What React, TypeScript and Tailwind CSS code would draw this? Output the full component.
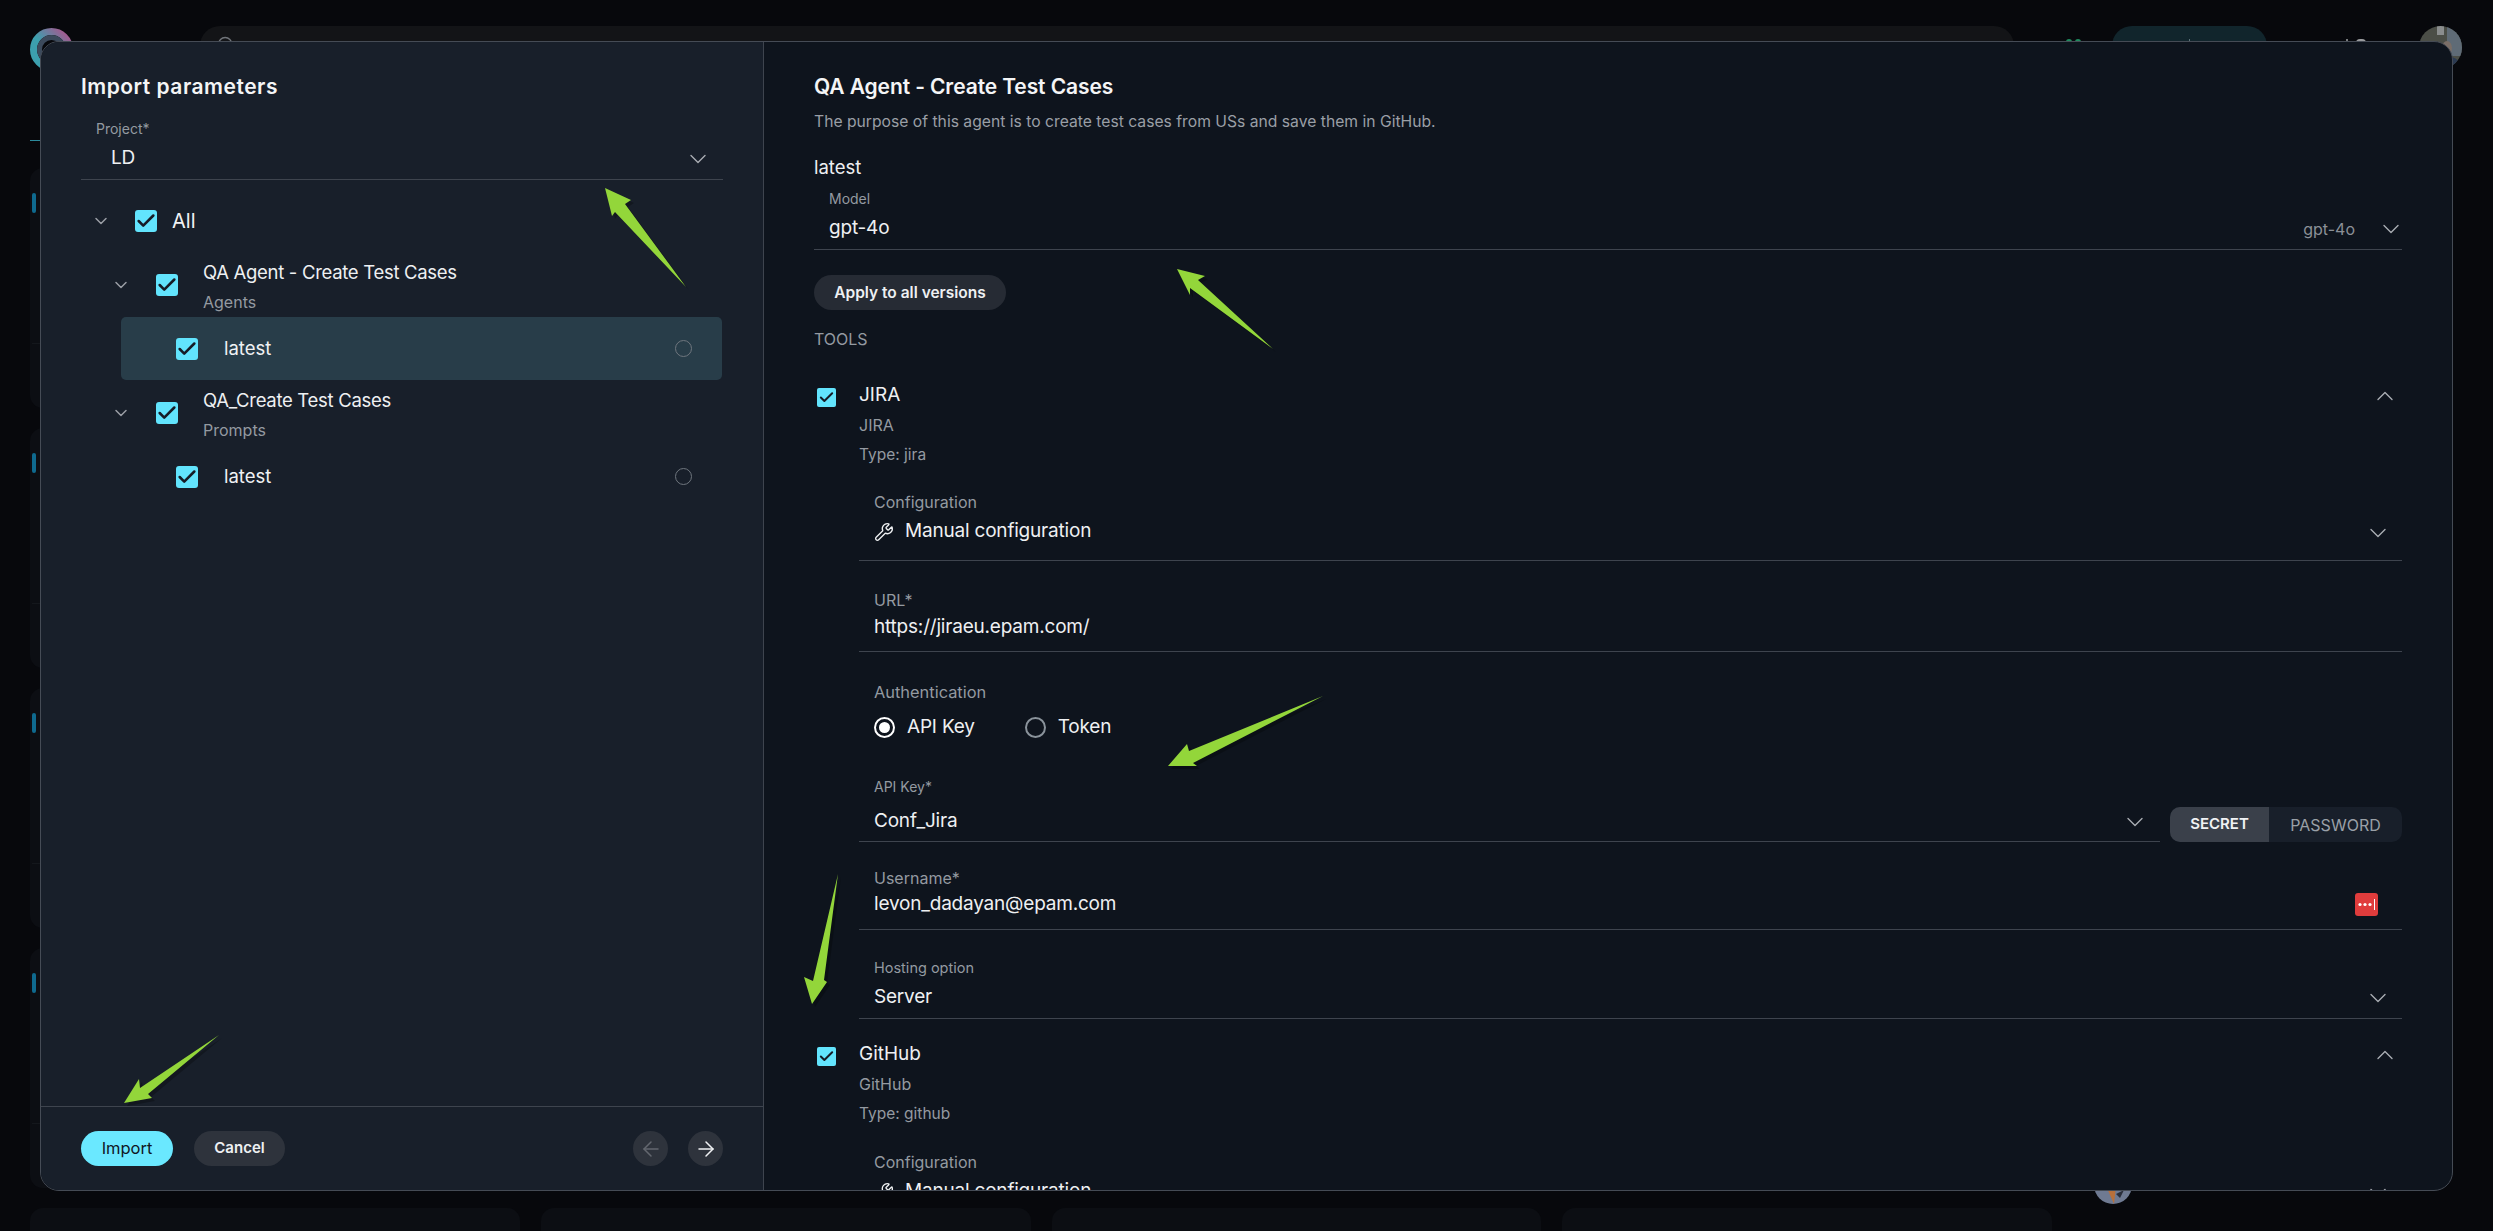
import { ReactNode } from 'react';
import { ArrowLeft, ArrowRight, Check, ChevronDown, ChevronUp, Search, Wrench } from 'lucide-react';

const TitleRow = ({ children, className = '' }: { children: ReactNode; className?: string }) => (
  <div className={`h-[24px] leading-[24px] text-[21px] font-semibold text-[#f4f5f6] ${className}`}>{children}</div>
);

const CheckBox = ({ size = 'big' }: { size?: 'big' | 'small' }) => (
  <div
    className={
      size === 'big'
        ? 'flex h-[22px] w-[22px] shrink-0 items-center justify-center rounded-[3px] bg-[#62e4fd]'
        : 'flex h-[19px] w-[19px] shrink-0 items-center justify-center rounded-[2px] bg-[#62e4fd]'
    }
  >
    <Check size={size === 'big' ? 22 : 17} strokeWidth={2.8} className="shrink-0 text-[#161c26]" />
  </div>
);

const Field = ({
  label,
  labelClass = 'text-[16px]',
  valueClass = 'mt-[5px]',
  className = 'pb-[6px]',
  children,
}: {
  label: string;
  labelClass?: string;
  valueClass?: string;
  className?: string;
  children: ReactNode;
}) => (
  <div className={`border-b border-[#3e444e] ${className}`}>
    <div className={`h-[18px] leading-[18px] text-[#949aa1] ${labelClass}`}>{label}</div>
    <div className={`flex h-[30px] items-center pt-[1px] text-[19px] tracking-[-0.2px] text-[#eef0f2] ${valueClass}`}>{children}</div>
  </div>
);

const Caret = () => <ChevronDown size={28} strokeWidth={1.2} className="text-[#a9adb3]" />;

const TreeGroup = ({ title, sub, selected }: { title: string; sub: string; selected?: boolean }) => (
  <>
    <div className="flex h-[62px] items-start pl-[70px]">
      <ChevronDown size={20} strokeWidth={1.8} className="mt-[20px] text-[#9a9ea5]" />
      <div className="ml-[25px] mt-[19px]">
        <CheckBox />
      </div>
      <div className="ml-[25px] mt-[5px]">
        <div className="h-[24px] text-[18.5px] leading-[24px] tracking-[-0.3px] text-[#eef0f2]">{title}</div>
        <div className="mt-[6px] h-[24px] text-[16px] leading-[24px] text-[#949aa1]">{sub}</div>
      </div>
    </div>
    <div
      className={`ml-[80px] mr-[41px] flex h-[63px] items-center rounded-[5px] pl-[55px] pr-[30px] ${selected ? 'bg-[#283d49]' : ''}`}
    >
      <CheckBox />
      <span className="ml-[26px] text-[18.5px] text-[#f0f2f4]">latest</span>
      <span className="ml-auto h-[17px] w-[17px] rounded-full border-[1.5px] border-[#6f767e]" />
    </div>
  </>
);

const ToolHead = ({ name, type, className }: { name: string; type: string; className: string }) => (
  <div className={`flex items-start ${className}`}>
    <div className="ml-[3px] mt-[5px]">
      <CheckBox size="small" />
    </div>
    <div className="ml-[23px]">
      <div className="h-[24px] text-[19px] leading-[24px] text-[#eef0f2]">{name}</div>
      <div className="mt-[6px] h-[24px] text-[16px] leading-[24px] text-[#949aa1]">{name}</div>
      <div className="mt-[6px] h-[24px] text-[15.5px] leading-[24px] text-[#949aa1]">Type: {type}</div>
    </div>
    <ChevronUp size={28} strokeWidth={1.2} className="ml-auto mr-[3px] -mt-[1px] text-[#a9adb3]" />
  </div>
);

const Radio = ({ label, on }: { label: string; on?: boolean }) => (
  <div className="flex items-center">
    <span
      className={
        on
          ? 'flex h-[21px] w-[21px] items-center justify-center rounded-full border-[2.5px] border-white'
          : 'h-[21px] w-[21px] rounded-full border-[2px] border-[#8a939b]'
      }
    >
      {on && <span className="h-[11px] w-[11px] rounded-full bg-white" />}
    </span>
    <span className="ml-[12px] text-[19px] tracking-[-0.2px] text-[#eef0f2]">{label}</span>
  </div>
);

// what is left of the page under the dialog
const PageBehind = () => (
  <div className="h-[1231px] overflow-hidden bg-[#07080c]">
    <div className="flex items-start pl-[30px] pt-[26px]">
      <svg width="43" height="43" viewBox="0 0 43 43" className="mt-[2px]">
        <defs>
          <linearGradient id="logo" x1="0" y1="1" x2="1" y2="0">
            <stop offset="0.45" stopColor="#3c9fae" />
            <stop offset="1" stopColor="#b34f8b" />
          </linearGradient>
        </defs>
        <circle cx="21.5" cy="21.5" r="18" fill="none" stroke="url(#logo)" strokeWidth="7" />
        <circle cx="21.5" cy="21.5" r="12" fill="none" stroke="#3c4a5c" strokeWidth="5" />
      </svg>
      <div className="ml-[127px] h-[44px] w-[1814px] rounded-[20px] bg-[#131417] pl-[16px] pt-[9px]">
        <Search size={20} strokeWidth={1.6} className="text-[#70747a]" />
      </div>
      <div className="ml-[52px] mt-[13px] flex gap-[3px]">
        <span className="h-[6px] w-[6px] rounded-full bg-[#1f8a5e]" />
        <span className="h-[6px] w-[6px] rounded-full bg-[#1f8a5e]" />
      </div>
      <div className="ml-[31px] flex h-[44px] w-[155px] justify-center rounded-[20px] bg-[#11252c] pt-[13px]">
        <span className="h-[4px] w-[1px] bg-[#5c7178]" />
      </div>
      <div className="ml-[79px] mt-[13px] flex gap-[8px]">
        <span className="h-[4px] w-[2px] bg-[#77797c]" />
        <span className="h-[4px] w-[10px] rounded-t-[4px] bg-[#9a9b9e]" />
      </div>
      <svg width="43" height="43" viewBox="0 0 43 43" className="ml-[53px]">
        <clipPath id="me">
          <circle cx="21.5" cy="21.5" r="21.5" />
        </clipPath>
        <g clipPath="url(#me)">
          <rect width="43" height="43" fill="#4b4e47" />
          <rect x="18" width="7" height="9" fill="#8a8d8e" />
          <rect x="28" y="0" width="15" height="30" fill="#5f6b76" />
          <ellipse cx="28" cy="22" rx="5" ry="7" fill="#7a6e67" />
          <path d="M18 43 C20 30 36 28 40 36 L40 43Z" fill="#2b3a52" />
        </g>
      </svg>
    </div>
    <div className="ml-[30px] mt-[69px] h-[1px] w-[60px] bg-[#2c8a9c]" />
    <div className="flex">
      <div className="ml-[30px] mt-[27px] grid w-[2022px] grid-cols-4 gap-x-[21px] gap-y-[20px]">
        {Array.from({ length: 20 }).map((_, i) => (
          <div key={i} className="h-[240px] rounded-[13px] bg-[#0c0e13] pl-[2px] pt-[25px]">
            <div className="h-[20px] w-[4px] rounded-[2px] bg-[#0f6a8f]" />
            <div className="mt-[130px] h-[1px] bg-[#14171c]" />
          </div>
        ))}
      </div>
      <svg width="38" height="38" viewBox="0 0 38 38" className="ml-[42px] mt-[1025px] shrink-0">
        <clipPath id="me2">
          <circle cx="19" cy="19" r="19" />
        </clipPath>
        <g clipPath="url(#me2)">
          <rect width="38" height="38" fill="#6f7a92" />
          <path d="M12 20 L20 38 L22 20Z" fill="#b8703a" />
          <path d="M22 28 L30 24 L26 32Z" fill="#2a2e3a" />
        </g>
      </svg>
    </div>
  </div>
);

const arrows = [
  '605,188 631,200 625,204 686,287 615,212 612,216',
  '1177,269 1205,276 1198,280 1273,349 1190,288 1190,295',
  '1168,766 1187,744 1189,751 1323,696 1193,763 1197,766',
  '812,1004 804,977 813,981 838,874 824,980 827,982',
  '124,1103 139,1079 140,1088 219,1035 148,1094 152,1098',
];

export default function App() {
  return (
    <div className="relative h-[1231px] w-[2493px] overflow-hidden font-[Inter,sans-serif]">
      <PageBehind />

      <div className="absolute left-[40px] top-[41px] flex h-[1150px] w-[2413px] overflow-hidden rounded-[19px] border border-[#454b55] bg-[#0e141d]">
        {/* Left: what gets imported */}
        <div className="flex w-[723px] shrink-0 flex-col border-r border-[#3e444e] bg-[#181f2a]">
          <div className="flex-1 pt-[33px]">
            <div className="px-[40px]">
              <TitleRow className="tracking-[0.5px]">Import parameters</TitleRow>
              <Field
                label="Project*"
                labelClass="pl-[15px] text-[14px]"
                className="mt-[21px] pb-[6px]"
              >
                <span className="pl-[30px]">LD</span>
                <span className="ml-auto mr-[11px]">
                  <Caret />
                </span>
              </Field>
            </div>

            <div className="mt-[24px] flex h-[34px] items-center pl-[50px]">
              <ChevronDown size={20} strokeWidth={1.8} className="text-[#9a9ea5]" />
              <div className="ml-[24px]">
                <CheckBox />
              </div>
              <span className="ml-[15px] text-[20px] text-[#f0f2f4]">All</span>
            </div>
            <div className="mt-[17px]">
              <TreeGroup title="QA Agent - Create Test Cases" sub="Agents" selected />
            </div>
            <div className="mt-[3px]">
              <TreeGroup title="QA_Create Test Cases" sub="Prompts" />
            </div>
          </div>

          <div className="flex h-[84px] items-start border-t border-[#3e444e] px-[40px] pt-[24px]">
            <button className="h-[35px] w-[92px] rounded-full bg-[#6ae8ff] text-[16.5px] text-[#10161f]">Import</button>
            <button className="ml-[21px] h-[35px] w-[91px] rounded-full bg-[#2e333c] text-[15px] font-semibold text-[#eef0f2]">Cancel</button>
            <button className="ml-auto flex h-[35px] w-[35px] items-center justify-center rounded-full bg-[#2e333c]">
              <ArrowLeft size={24} strokeWidth={1.5} className="text-[#63676f]" />
            </button>
            <button className="ml-[20px] flex h-[35px] w-[35px] items-center justify-center rounded-full bg-[#2e333c]">
              <ArrowRight size={24} strokeWidth={1.5} className="text-[#f0f2f4]" />
            </button>
          </div>
        </div>

        {/* Right: settings of the selected version */}
        <div className="min-w-0 flex-1 overflow-hidden px-[50px] pt-[33px]">
          <TitleRow className="tracking-[-0.1px]">QA Agent - Create Test Cases</TitleRow>
          <div className="mt-[11px] h-[24px] text-[15.7px] leading-[24px] text-[#9a9fa6]">
            The purpose of this agent is to create test cases from USs and save them in GitHub.
          </div>
          <div className="mt-[20px] h-[26px] text-[18.5px] leading-[26px] text-[#eef0f2]">latest</div>

          <Field label="Model" labelClass="pl-[15px] text-[14px]" className="mt-[10px] pb-[6px]">
            <span className="pl-[15px]">gpt-4o</span>
            <span className="ml-auto text-[16px] tracking-normal text-[#8b9097]">gpt-4o</span>
            <span className="ml-[22px] mr-[-3px]">
              <Caret />
            </span>
          </Field>

          <button className="mt-[25px] block h-[35px] w-[192px] rounded-full bg-[#262b34] text-[15.5px] font-semibold text-[#eef0f2]">
            Apply to all versions
          </button>
          <div className="mt-[19px] h-[20px] text-[16px] leading-[20px] text-[#949aa1]">TOOLS</div>

          <ToolHead name="JIRA" type="jira" className="mt-[34px]" />

          <div className="ml-[45px]">
            <Field label="Configuration" labelClass="pl-[15px]" className="mt-[26px] pb-[14px]">
              <Wrench size={20} strokeWidth={1.6} className="ml-[15px]" />
              <span className="ml-[11px]">Manual configuration</span>
              <span className="ml-auto mr-[10px] mt-[3px]">
                <Caret />
              </span>
            </Field>
            <Field label="URL*" labelClass="pl-[15px]" valueClass="mt-[3px]" className="mt-[30px] pb-[9px]">
              <span className="pl-[15px]">https://jiraeu.epam.com/</span>
            </Field>

            <div className="mt-[31px] h-[18px] pl-[15px] text-[16.4px] leading-[18px] text-[#949aa1]">Authentication</div>
            <div className="ml-[15px] mt-[11px] flex h-[30px] items-center gap-[50px]">
              <Radio label="API Key" on />
              <Radio label="Token" />
            </div>

            <div className="flex items-end">
              <Field
                label="API Key*"
                labelClass="pl-[15px] text-[14px]"
                valueClass="mt-[10px]"
                className="mt-[36px] w-[1301px] pb-[5px]"
              >
                <span className="pl-[15px]">Conf_Jira</span>
                <span className="ml-auto mr-[11px]">
                  <Caret />
                </span>
              </Field>
              <div className="ml-[10px] flex h-[35px] w-[232px] items-center overflow-hidden rounded-[10px] bg-[#181f2a]">
                <span className="flex h-full w-[99px] items-center justify-center bg-[#3a404a] text-[15px] font-semibold text-[#f0f2f4]">SECRET</span>
                <span className="flex h-full flex-1 items-center justify-center text-[16px] text-[#9aa0a7]">PASSWORD</span>
              </div>
            </div>

            <Field label="Username*" labelClass="pl-[15px]" valueClass="mt-[2px]" className="mt-[27px] pb-[10px]">
              <span className="pl-[15px]">levon_dadayan@epam.com</span>
              <svg width="23" height="23" viewBox="0 0 23 23" className="ml-auto mr-[24px]">
                <rect width="23" height="23" rx="3" fill="#e03c3c" />
                <circle cx="5" cy="11.5" r="1.6" fill="#fff" />
                <circle cx="10" cy="11.5" r="1.6" fill="#fff" />
                <circle cx="15" cy="11.5" r="1.6" fill="#fff" />
                <rect x="19" y="6" width="1" height="11" fill="#fff" />
              </svg>
            </Field>
            <Field label="Hosting option" labelClass="pl-[15px] text-[14.5px]" className="mt-[29px] pb-[6px]">
              <span className="pl-[15px]">Server</span>
              <span className="ml-auto mr-[10px]">
                <Caret />
              </span>
            </Field>
          </div>

          <ToolHead name="GitHub" type="github" className="mt-[23px]" />

          <div className="ml-[45px]">
            <Field label="Configuration" labelClass="pl-[15px]" className="mt-[27px] pb-[14px]">
              <Wrench size={20} strokeWidth={1.6} className="ml-[15px]" />
              <span className="ml-[11px]">Manual configuration</span>
              <span className="ml-auto mr-[10px] mt-[3px]">
                <Caret />
              </span>
            </Field>
          </div>
        </div>
      </div>

      {/* green annotation arrows on top of the screenshot */}
      <svg viewBox="0 0 2493 1231" className="pointer-events-none absolute left-0 top-0 h-[1231px] w-[2493px]">
        {arrows.map((points) => (
          <g key={points}>
            <polygon points={points} fill="#000" opacity="0.25" transform="translate(3 3)" />
            <polygon points={points} fill="#93d63a" />
          </g>
        ))}
      </svg>
    </div>
  );
}
